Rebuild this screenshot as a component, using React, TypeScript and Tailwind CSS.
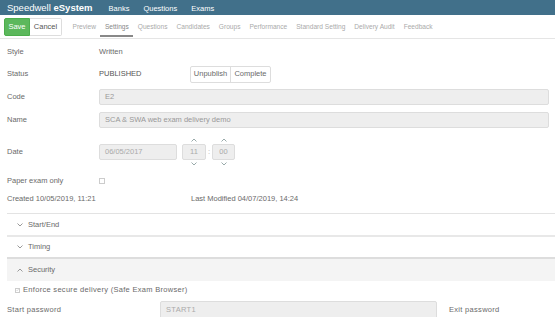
import React from 'react'

const tabs = ['Preview', 'Settings', 'Questions', 'Candidates', 'Groups', 'Performance', 'Standard Setting', 'Delivery Audit', 'Feedback']

function Up() {
  return (
    <svg width="6" height="4" viewBox="0 0 6 4" className="text-[#9aa]">
      <path d="M0.5 3.5 L3 1 L5.5 3.5" fill="none" stroke="currentColor" strokeWidth="1" />
    </svg>
  )
}

function Down() {
  return (
    <svg width="6" height="4" viewBox="0 0 6 4" className="text-[#9aa]">
      <path d="M0.5 0.5 L3 3 L5.5 0.5" fill="none" stroke="currentColor" strokeWidth="1" />
    </svg>
  )
}

function Row({ label, children, h }: { label: string; children: React.ReactNode; h: string }) {
  return (
    <div className={`flex items-center ${h}`}>
      <div className="w-[92px] shrink-0">{label}</div>
      {children}
    </div>
  )
}

export default function App() {
  return (
    <div className="w-[555px] h-[317px] overflow-hidden bg-white text-[7.5px] text-[#6a6a6a]" style={{ fontFamily: '"Liberation Sans", Arial, sans-serif' }}>
      <div className="h-[15px] bg-[#41708a] flex items-end pb-[3px] pl-[7px] text-white">
        <span className="text-[9.5px] leading-none">Speedwell <span className="font-bold">eSystem</span></span>
        <span className="ml-[16px] text-[7.5px] leading-none">Banks</span>
        <span className="ml-[14px] text-[7.5px] leading-none">Questions</span>
        <span className="ml-[14px] text-[7.5px] leading-none">Exams</span>
      </div>

      <div className="h-[24px] flex items-center pl-[4px] border-b border-[#e5e5e5]">
        <div className="flex">
          <button className="h-[18px] w-[26px] bg-[#5cb85c] text-white rounded-l-[2px] border border-[#4cae4c]">Save</button>
          <button className="h-[18px] w-[32px] bg-white text-[#555] rounded-r-[2px] border border-l-0 border-[#ddd]">Cancel</button>
        </div>
        <div className="flex ml-[6px] h-full text-[6.6px]">
          {tabs.map((t) => (
            <div key={t} className={`relative flex items-center px-[4.5px] h-full ${t === 'Settings' ? 'text-[#888]' : 'text-[#aaa]'}`}>
              {t}
              {t === 'Settings' && <div className="absolute left-0 right-0 bottom-[1px] h-[2px] bg-[#888]" />}
            </div>
          ))}
        </div>
      </div>

      <div className="pl-[7px] pr-[6px] pt-[2px]">
        <Row label="Style" h="h-[22px]">
          <span>Written</span>
        </Row>
        <Row label="Status" h="h-[22px]">
          <span className="w-[91px] text-[#555]">PUBLISHED</span>
          <div className="flex h-[17px] border border-[#ddd] rounded-[2px]">
            <div className="w-[40px] flex items-center justify-center border-r border-[#ddd]">Unpublish</div>
            <div className="w-[39px] flex items-center justify-center">Complete</div>
          </div>
        </Row>
        <Row label="Code" h="h-[23px]">
          <div className="flex-1 h-[16px] bg-[#eee] border border-[#ddd] rounded-[2px] flex items-center pl-[5px] text-[#999]">E2</div>
        </Row>
        <Row label="Name" h="h-[23px]">
          <div className="flex-1 h-[16px] bg-[#eee] border border-[#ddd] rounded-[2px] flex items-center pl-[5px] text-[#999]">SCA &amp; SWA web exam delivery demo</div>
        </Row>
        <div className="flex items-center h-[42px]">
          <div className="w-[92px] shrink-0">Date</div>
          <div className="w-[78px] h-[16px] bg-[#eee] border border-[#ddd] rounded-[2px] flex items-center pl-[5px] text-[#aaa]">06/05/2017</div>
          <div className="ml-[5px] flex flex-col items-center gap-[2px]">
            <Up />
            <div className="w-[24px] h-[16px] bg-[#eee] border border-[#ddd] rounded-[2px] flex items-center justify-center text-[#aaa]">11</div>
            <Down />
          </div>
          <span className="w-[6px] text-center text-[#aaa]">:</span>
          <div className="flex flex-col items-center gap-[2px]">
            <Up />
            <div className="w-[23px] h-[16px] bg-[#eee] border border-[#ddd] rounded-[2px] flex items-center justify-center text-[#aaa]">00</div>
            <Down />
          </div>
        </div>
        <Row label="Paper exam only" h="h-[16px]">
          <div className="w-[6px] h-[6px] border border-[#ccc]" />
        </Row>
        <div className="flex items-center h-[20px]">
          <div className="w-[184px] shrink-0">Created 10/05/2019, 11:21</div>
          <div>Last Modified 04/07/2019, 14:24</div>
        </div>
      </div>

      <div className="ml-[7px] mt-[4px] border-t border-[#e3e3e3]">
        <div className="h-[23px] flex items-center pl-[10px] border-b-2 border-[#e8e8e8]">
          <svg width="6" height="4" viewBox="0 0 6 4" className="text-[#999] mr-[5px]"><path d="M0.5 0.5 L3 3 L5.5 0.5" fill="none" stroke="currentColor" /></svg>
          Start/End
        </div>
        <div className="h-[22px] flex items-center pl-[10px] border-b-2 border-[#ddd]">
          <svg width="6" height="4" viewBox="0 0 6 4" className="text-[#999] mr-[5px]"><path d="M0.5 0.5 L3 3 L5.5 0.5" fill="none" stroke="currentColor" /></svg>
          Timing
        </div>
        <div className="h-[22px] flex items-center pl-[10px] bg-[#f4f4f4]">
          <svg width="6" height="4" viewBox="0 0 6 4" className="text-[#999] mr-[5px]"><path d="M0.5 3.5 L3 1 L5.5 3.5" fill="none" stroke="currentColor" /></svg>
          Security
        </div>
        <div className="pt-[3px]">
          <div className="flex items-center h-[12px] pl-[8px] tracking-[0.3px]">
            <div className="w-[5px] h-[5px] border border-[#ccc] mr-[3px] flex items-center justify-center">
              <svg width="4" height="4" viewBox="0 0 4 4"><path d="M0.5 2 L1.5 3 L3.5 0.8" fill="none" stroke="#bbb" strokeWidth="0.7" /></svg>
            </div>
            Enforce secure delivery (Safe Exam Browser)
          </div>
          <div className="flex items-center mt-[5px] h-[18px] tracking-[0.3px]">
            <div className="w-[153px] shrink-0">Start password</div>
            <div className="w-[277px] h-[18px] bg-[#eee] border border-[#ddd] rounded-[2px] flex items-center pl-[5px] text-[#aaa]">START1</div>
            <div className="ml-[12px]">Exit password</div>
          </div>
        </div>
      </div>
    </div>
  )
}
